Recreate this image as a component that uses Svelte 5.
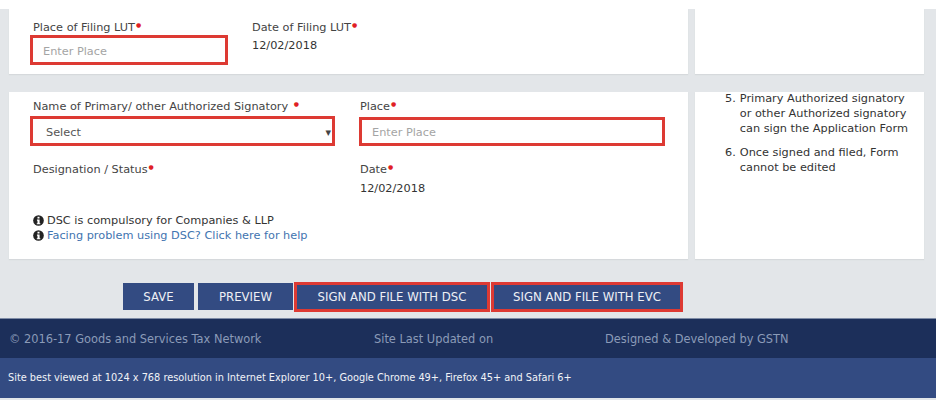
<script>
	const notes = [
		{ n: 5, text: 'Primary Authorized signatory or other Authorized signatory can sign the Application Form' },
		{ n: 6, text: 'Once signed and filed, Form cannot be edited' }
	]
</script>

<div class="page">
	<div class="strip"></div>
	<div class="band">
		<section class="card main top">
			<div class="field first">
				<span class="label">Place of Filing LUT<i>●</i></span>
				<input class="box" placeholder="Enter Place" />
			</div>
			<div class="field">
				<span class="label">Date of Filing LUT<i>●</i></span>
				<span class="value">12/02/2018</span>
			</div>
		</section>
		<section class="card side"></section>
	</div>

	<div class="band second">
		<section class="card main form">
			<div class="grid">
				<div class="field">
					<span class="label">Name of Primary/ other Authorized Signatory <i class="gap">●</i></span>
					<div class="box select"><span>Select</span><b>▾</b></div>
				</div>
				<div class="field">
					<span class="label">Place<i>●</i></span>
					<input class="box place" placeholder="Enter Place" />
				</div>
				<div class="field">
					<span class="label">Designation / Status<i>●</i></span>
				</div>
				<div class="field">
					<span class="label">Date<i>●</i></span>
					<span class="value">12/02/2018</span>
				</div>
			</div>
			<div class="info">
				<p><svg viewBox="0 0 12 12"><circle cx="6" cy="6" r="5.8" /><path d="M4.9 2h2.2v1.9H4.9zM4.3 4.9h2.9v4h.8v1.3H4.1V8.9h.8V6.2h-.6z" /></svg>DSC is compulsory for Companies &amp; LLP</p>
				<p><svg viewBox="0 0 12 12"><circle cx="6" cy="6" r="5.8" /><path d="M4.9 2h2.2v1.9H4.9zM4.3 4.9h2.9v4h.8v1.3H4.1V8.9h.8V6.2h-.6z" /></svg><a href="#help">Facing problem using DSC? Click here for help</a></p>
			</div>
		</section>
		<section class="card side">
			<ol>
				{#each notes as note}
					<li><span>{note.n}.</span><span>{note.text}</span></li>
				{/each}
			</ol>
		</section>
	</div>

	<div class="actions">
		<button class="save">SAVE</button>
		<button class="preview">PREVIEW</button>
		<button class="hl dsc">SIGN AND FILE WITH DSC</button>
		<button class="hl evc">SIGN AND FILE WITH EVC</button>
	</div>

	<footer>
		<div class="dark">
			<span class="c1">© 2016-17 Goods and Services Tax Network</span>
			<span class="c2">Site Last Updated on</span>
			<span class="c3">Designed &amp; Developed by GSTN</span>
		</div>
		<div class="blue">Site best viewed at 1024 x 768 resolution in Internet Explorer 10+, Google Chrome 49+, Firefox 45+ and Safari 6+</div>
	</footer>
</div>

<style>
	:global(body) {
		margin: 0;
		background: #fff;
	}

	.page {
		width: 936px;
		height: 400px;
		overflow: hidden;
		background: #e3e6e9;
		font-family: "DejaVu Sans", sans-serif;
		font-size: 11.3px;
		color: #333;
		display: flex;
		flex-direction: column;
	}

	.strip {
		height: 9px;
		background: #fff;
		flex: none;
	}

	.band {
		display: flex;
		gap: 7px;
		padding: 0 12px 0 9px;
	}

	.second {
		margin-top: 18px;
	}

	.card {
		background: #fff;
		box-shadow: 0 1px 1px #d6d9dc;
	}

	.main {
		width: 679px;
		box-sizing: border-box;
	}

	.side {
		flex: 1;
	}

	.top {
		height: 65px;
		display: flex;
		padding: 11px 0 0 24px;
	}

	.top .first {
		width: 219px;
	}

	.field {
		display: flex;
		flex-direction: column;
		align-items: flex-start;
	}

	.label {
		display: block;
		height: 15px;
		line-height: 15px;
		color: #444;
	}

	.label i {
		color: #e01f26;
		font-style: normal;
		font-size: 6px;
		line-height: 0;
		vertical-align: 4px;
		margin-left: 1px;
	}

	.label .gap {
		margin-left: 2px;
	}

	.value {
		margin-top: 3px;
		line-height: 15px;
	}

	.grid .value {
		margin-top: 4px;
	}

	.box {
		box-sizing: border-box;
		border: 3px solid #dd3a33;
		background: #fff;
		width: 198px;
		height: 30px;
		margin: 0 0 0 -3px;
		padding: 2px 10px 0;
		font: inherit;
		outline: none;
	}

	.box::placeholder {
		color: #a4a4a4;
		opacity: 1;
	}

	.form {
		height: 167px;
		padding: 7px 0 0 24px;
	}

	.grid {
		display: grid;
		grid-template-columns: 327px 305px;
		grid-template-rows: 63px 51px;
	}

	.select {
		display: flex;
		align-items: center;
		justify-content: space-between;
		width: 305px;
		margin-top: 2px;
		color: #555;
		padding: 2px 1px 0 13px;
	}

	.select b {
		font-size: 11px;
		font-weight: normal;
		color: #444;
	}

	.place {
		width: 306px;
		margin-left: -1px;
		margin-top: 3px;
		height: 29px;
	}

	.info p {
		margin: 0;
		line-height: 15px;
		display: flex;
		align-items: center;
		gap: 3px;
	}

	.info svg {
		width: 11px;
		height: 11px;
	}

	.info circle {
		fill: #222;
	}

	.info path {
		fill: #fff;
	}

	.info a {
		color: #3f74b0;
		text-decoration: none;
	}

	ol {
		list-style: none;
		margin: -1px 0 0;
		padding: 0 0 0 30px;
	}

	li {
		display: flex;
		gap: 4px;
		line-height: 15px;
		margin-bottom: 9px;
		width: 185px;
	}

	.actions {
		display: flex;
		margin-top: 24px;
		padding-left: 123px;
		height: 27px;
	}

	button {
		background: #334b82;
		color: #eef0f5;
		border: 0;
		font: inherit;
		font-size: 11.7px;
		padding: 0;
		height: 27px;
	}

	.save {
		width: 71px;
	}

	.preview {
		width: 95px;
		margin-left: 4px;
	}

	.hl {
		border: 3px solid #dd3a33;
		height: 30px;
		margin-top: -1px;
	}

	.dsc {
		width: 196px;
		margin-left: 1px;
	}

	.evc {
		width: 192px;
		margin-left: 1px;
	}

	footer {
		margin-top: 8px;
		color: #8b9bb8;
	}

	.dark {
		height: 40px;
		background: #1c2f5a;
		border-top: 1px solid #7f8ca6;
		box-sizing: border-box;
		display: flex;
		align-items: center;
		padding: 1px 0 0 9px;
		font-size: 11.4px;
	}

	.c1 {
		width: 365px;
	}

	.c2 {
		width: 231px;
	}

	.blue {
		height: 40px;
		background: #334b82;
		color: #f1f3f7;
		font-size: 9.78px;
		line-height: 40px;
		padding-left: 8px;
	}
</style>
